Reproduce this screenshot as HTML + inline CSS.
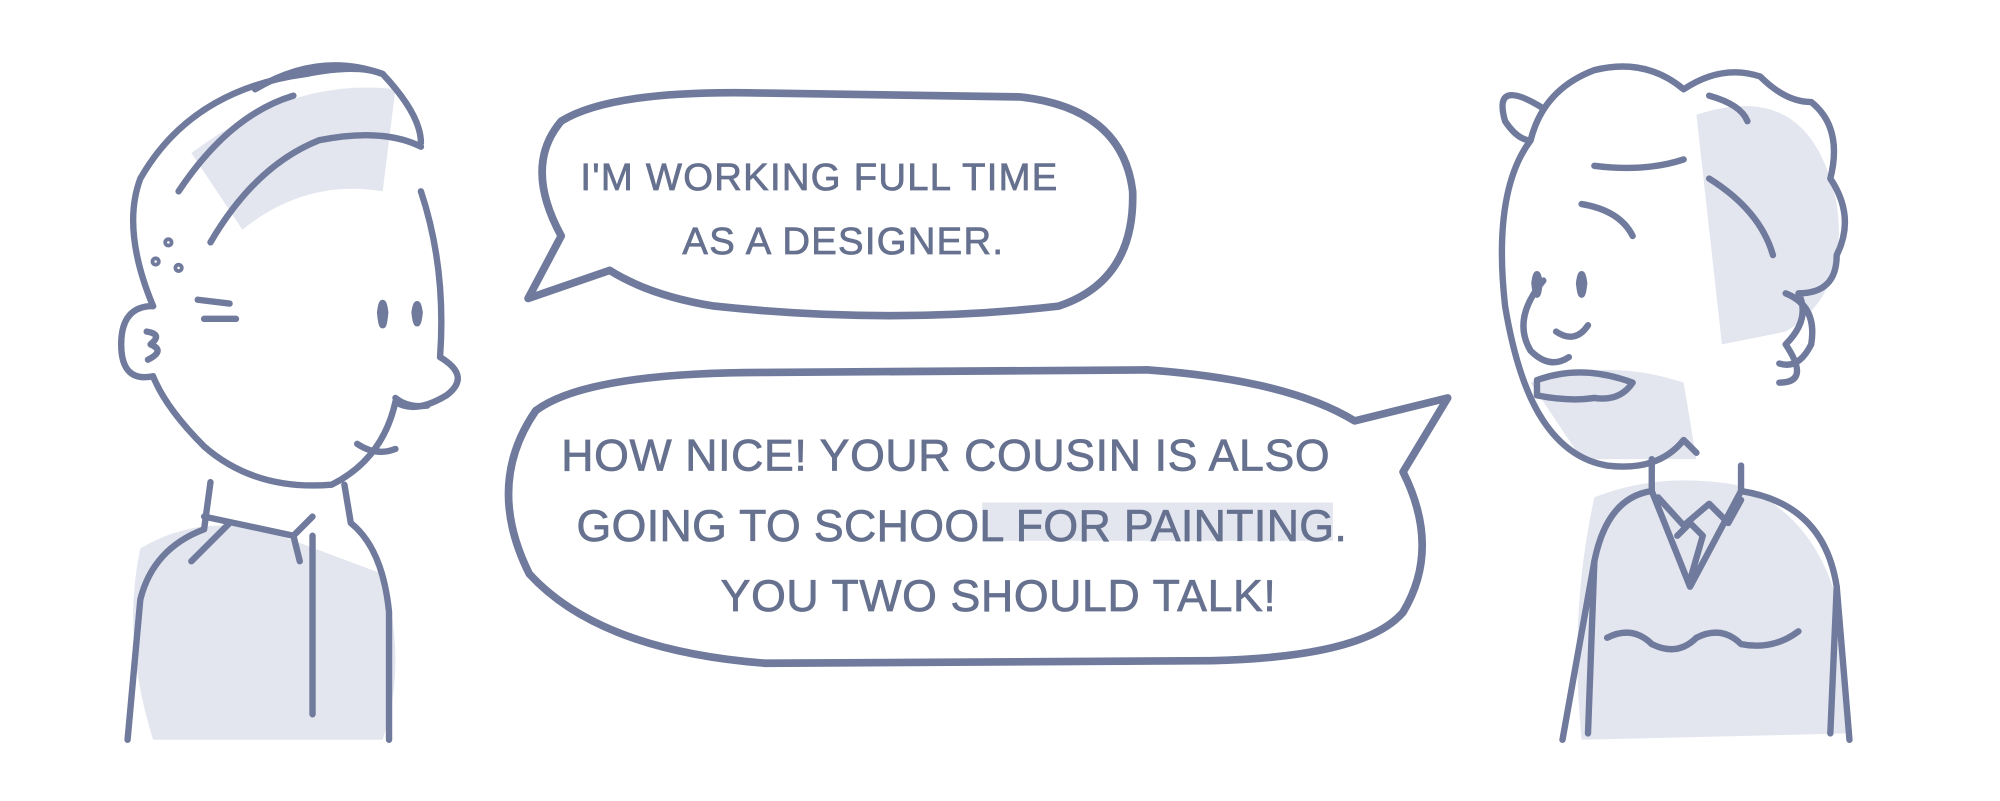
<!DOCTYPE html>
<html><head><meta charset="utf-8"><style>
html,body{margin:0;padding:0;background:#fff;width:2000px;height:801px;overflow:hidden}
svg{display:block}
text{font-family:"Liberation Sans",sans-serif;fill:#66718f;stroke:#66718f;stroke-width:0.6}
</style></head><body>
<svg width="2000" height="801" viewBox="0 0 1568 628" xmlns="http://www.w3.org/2000/svg">
<g stroke="none" fill="#e3e6ef">
<path d="M150 120 Q230 60 310 70 L300 150 Q240 140 190 180 Z"/>
<path d="M110 430 Q160 400 220 420 L300 450 Q320 520 300 580 L120 580 Q95 500 110 430Z"/>
<path d="M1250 390 Q1300 370 1360 380 Q1420 400 1440 470 L1450 575 L1240 580 Q1230 480 1250 390Z"/>
<path d="M1330 90 Q1420 60 1440 160 Q1450 230 1400 260 L1350 270 Q1340 180 1330 90Z"/>
<path d="M1200 300 Q1260 280 1320 300 L1330 360 L1240 360 Z"/>
<rect x="770" y="394" width="275" height="30"/>
</g>
<g fill="none" stroke="#6f7a9c" stroke-width="5" stroke-linecap="round" stroke-linejoin="round">
<path stroke-width="6" d="M440 185 Q410 130 440 95 Q480 70 600 73 L800 76 Q880 85 888 150 Q890 220 830 240 Q700 255 560 240 Q510 232 478 212 L414 234 Z"/>
<path stroke-width="6" d="M415 450 Q380 380 420 322 Q460 292 600 292 L900 290 Q1010 298 1062 330 L1135 312 L1100 370 Q1130 430 1100 480 Q1070 515 950 518 L600 520 Q470 510 415 450Z"/>
<path d="M120 240 Q95 180 110 140 Q150 70 240 58 Q280 50 300 58 Q330 90 330 112"/>
<path d="M300 58 Q250 40 200 70"/>
<path d="M140 150 Q180 90 230 75"/>
<path d="M165 190 Q200 130 250 110 Q300 100 330 115"/>
<path d="M330 150 Q350 210 345 280 Q370 295 350 310 Q325 325 310 315 Q300 360 260 380 Q200 385 160 350 Q130 320 120 295 Q95 300 95 270 Q95 240 120 240"/>
<path d="M115 260 Q128 262 118 270 Q130 275 116 282"/>
<path d="M155 235 L180 238 M160 250 L185 250"/>
<path d="M298 245 Q300 265 302 245 Q300 230 298 245Z M325 245 Q327 262 329 245 Q327 232 325 245Z"/>
<path d="M310 312 Q320 320 335 318 M280 348 Q295 358 310 352"/>
<path d="M165 378 L160 415 Q120 430 110 470 L100 580 M270 380 L275 410 Q300 430 305 480 L305 580"/>
<path d="M160 405 L230 420 L245 405 M230 420 L235 440 M180 410 L150 440 M245 420 L245 560"/>
<circle cx="132" cy="190" r="1.5"/><circle cx="122" cy="205" r="1.5"/><circle cx="140" cy="210" r="1.5"/>
<path d="M1210 85 Q1170 60 1180 95 Q1190 110 1200 110 Q1170 150 1180 240 Q1190 300 1210 330 Q1230 360 1260 365 Q1300 370 1320 345 L1330 355"/>
<path d="M1200 110 Q1210 70 1250 55 Q1290 45 1320 70 Q1350 50 1380 60 Q1400 80 1420 80 Q1445 100 1435 140 Q1455 170 1440 200 Q1440 230 1410 230 Q1420 250 1400 270 Q1420 300 1395 300"/>
<path d="M1250 130 Q1290 135 1320 125 M1340 140 Q1380 165 1390 200 M1340 75 Q1365 82 1370 95 M1240 160 Q1270 165 1280 185"/>
<path d="M1210 220 Q1185 250 1200 275 Q1215 290 1230 280 M1220 260 Q1235 270 1245 255"/>
<path d="M1203 222 Q1205 240 1207 222 Q1205 208 1203 222Z M1238 222 Q1240 240 1242 222 Q1240 208 1238 222Z"/>
<path d="M1205 298 Q1240 285 1280 300 Q1270 315 1250 312 Q1230 315 1205 310Z"/>
<path d="M1400 230 Q1425 240 1420 270 Q1410 290 1395 285"/>
<path d="M1295 360 L1295 385 Q1260 390 1250 440 L1225 580 M1365 365 L1365 385 Q1430 395 1440 460 L1450 580"/>
<path d="M1295 385 L1325 460 L1365 385 M1300 390 L1320 412 L1340 395 L1355 410 L1365 392 M1315 420 L1325 410 L1335 420 L1325 455"/>
<path d="M1260 500 Q1280 490 1295 505 Q1315 515 1330 500 Q1350 490 1365 505 Q1390 510 1410 495"/>
<path d="M1250 440 L1245 575 M1440 460 L1435 575"/>
</g>
<text x="455" y="149" font-size="30" letter-spacing="1">I'M WORKING FULL TIME</text>
<text x="535" y="199" font-size="30" letter-spacing="1">AS A DESIGNER.</text>
<text x="440" y="369" font-size="35" letter-spacing="0.5">HOW NICE! YOUR COUSIN IS ALSO</text>
<text x="452" y="424" font-size="35" letter-spacing="0.3">GOING TO SCHOOL FOR PAINTING.</text>
<text x="565" y="479" font-size="35" letter-spacing="0.5">YOU TWO SHOULD TALK!</text>
</svg>
</body></html>
